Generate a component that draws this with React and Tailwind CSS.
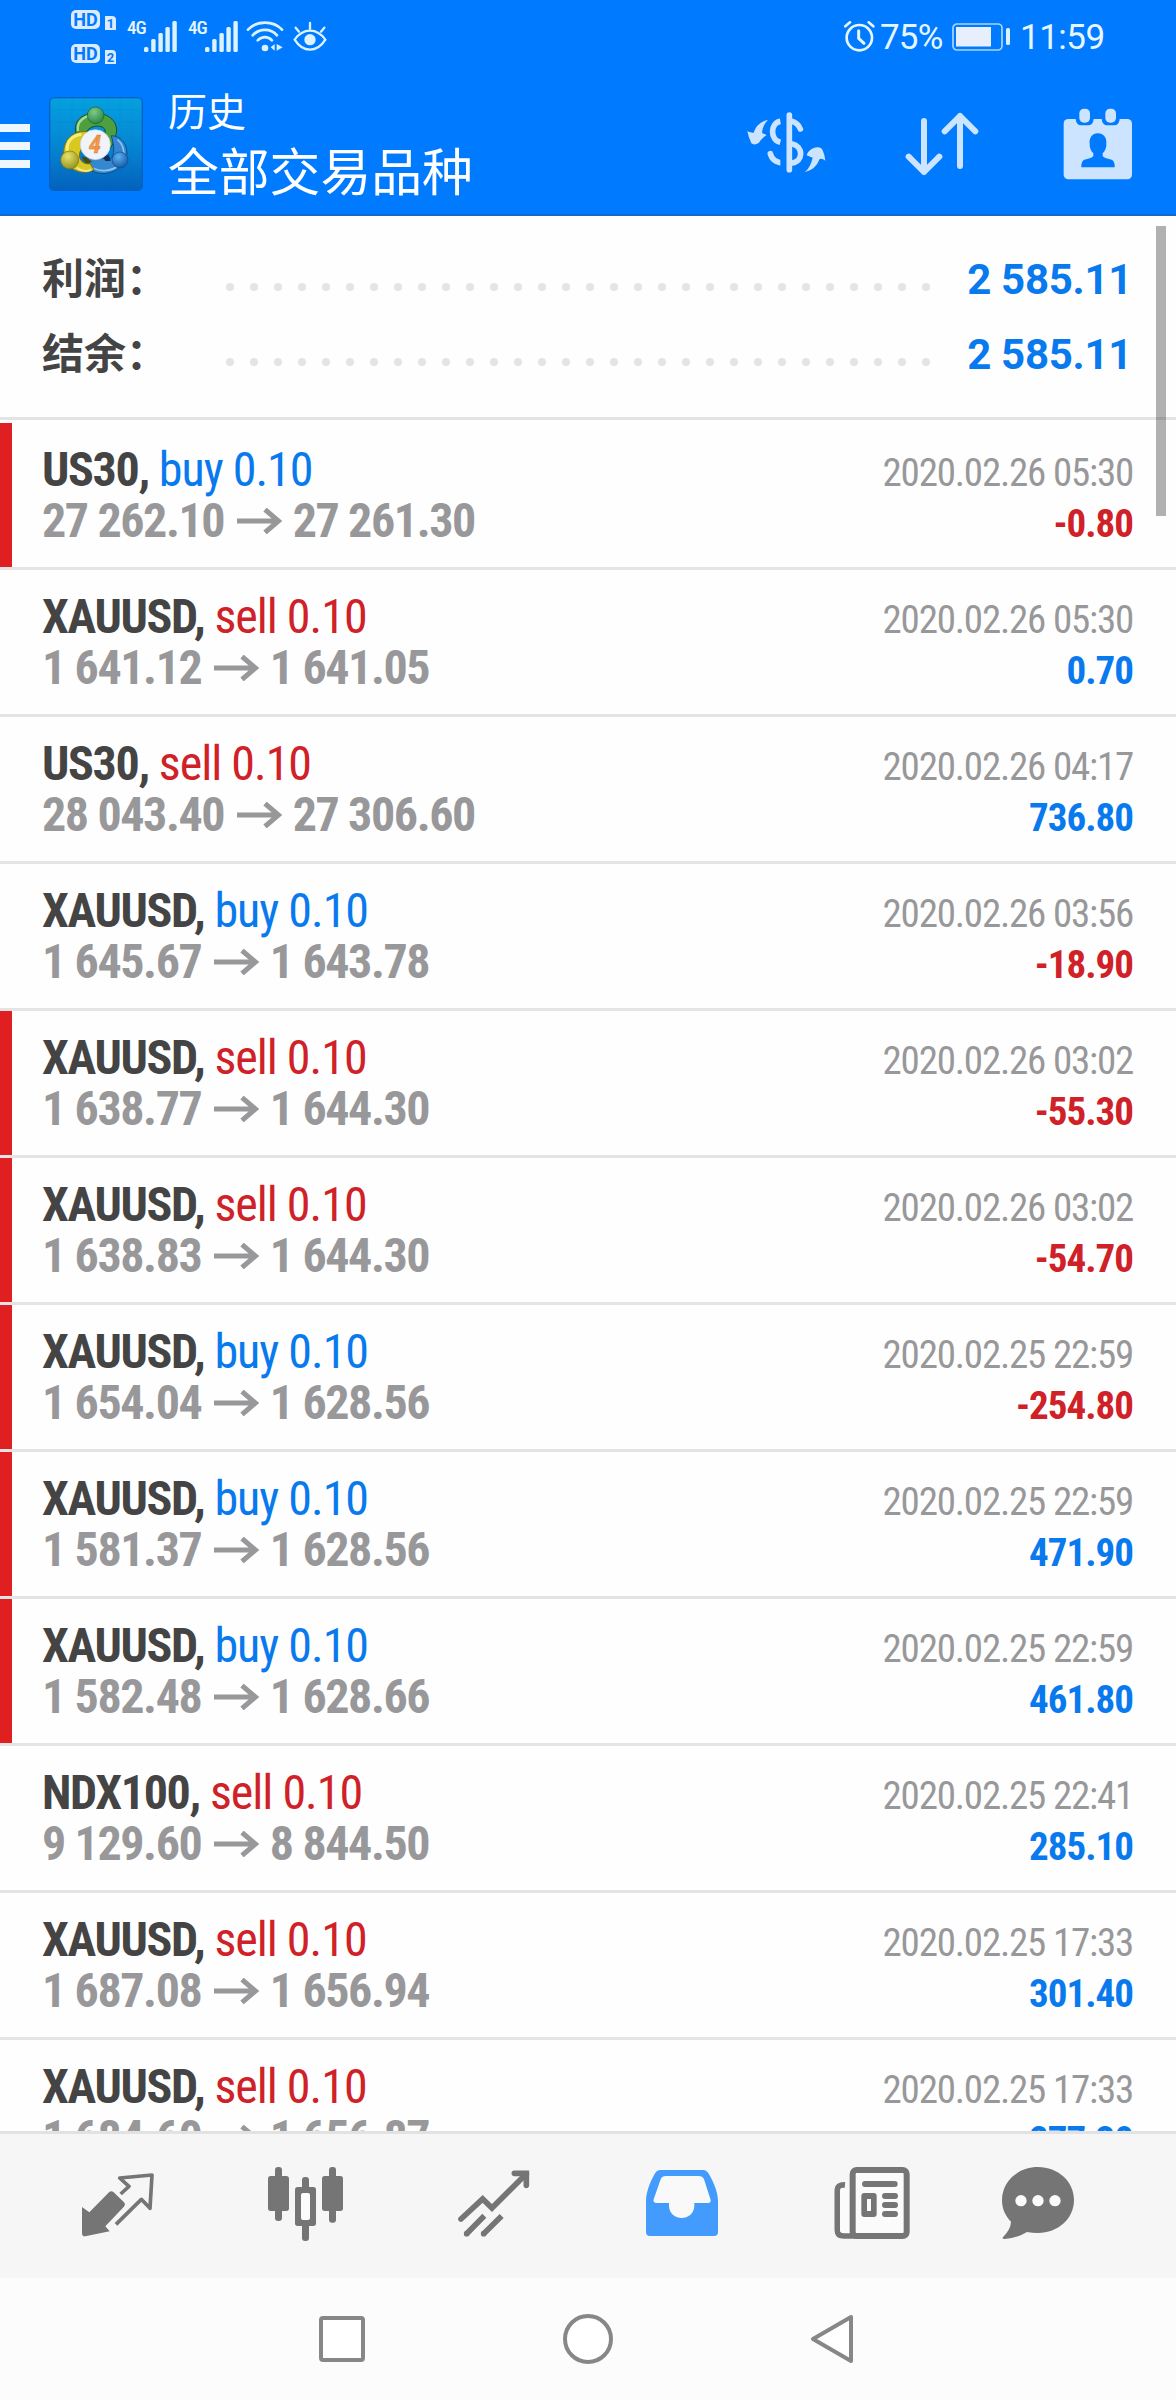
const deals = [
  { symbol: "US30", side: "buy", open: "27 262.10", close: "27 261.30", time: "2020.02.26 05:30", profit: "-0.80", marked: true },
  { symbol: "XAUUSD", side: "sell", open: "1 641.12", close: "1 641.05", time: "2020.02.26 05:30", profit: "0.70" },
  { symbol: "US30", side: "sell", open: "28 043.40", close: "27 306.60", time: "2020.02.26 04:17", profit: "736.80" },
  { symbol: "XAUUSD", side: "buy", open: "1 645.67", close: "1 643.78", time: "2020.02.26 03:56", profit: "-18.90" },
  { symbol: "XAUUSD", side: "sell", open: "1 638.77", close: "1 644.30", time: "2020.02.26 03:02", profit: "-55.30", marked: true },
  { symbol: "XAUUSD", side: "sell", open: "1 638.83", close: "1 644.30", time: "2020.02.26 03:02", profit: "-54.70", marked: true },
  { symbol: "XAUUSD", side: "buy", open: "1 654.04", close: "1 628.56", time: "2020.02.25 22:59", profit: "-254.80", marked: true },
  { symbol: "XAUUSD", side: "buy", open: "1 581.37", close: "1 628.56", time: "2020.02.25 22:59", profit: "471.90", marked: true },
  { symbol: "XAUUSD", side: "buy", open: "1 582.48", close: "1 628.66", time: "2020.02.25 22:59", profit: "461.80", marked: true },
  { symbol: "NDX100", side: "sell", open: "9 129.60", close: "8 844.50", time: "2020.02.25 22:41", profit: "285.10" },
  { symbol: "XAUUSD", side: "sell", open: "1 687.08", close: "1 656.94", time: "2020.02.25 17:33", profit: "301.40" },
  { symbol: "XAUUSD", side: "sell", open: "1 684.60", close: "1 656.87", time: "2020.02.25 17:33", profit: "277.30" },
];

function HdBadge({ n }) {
  return (
    <div className="flex h-5 items-start">
      <div className="flex h-[19px] w-[29px] items-center justify-center rounded-[5px] bg-[#dcebff] text-[18px] font-bold leading-none text-[#007aff]">
        HD
      </div>
      <div className="ml-[5px] mt-[6px] flex h-[14px] w-[11px] items-center justify-center rounded-tr-[4px] bg-[#dcebff] text-[13px] font-bold leading-none text-[#007aff]">
        {n}
      </div>
    </div>
  );
}

function Signal() {
  return (
    <div className="flex">
      <span className="h-[16px] w-[17px] whitespace-nowrap font-['Roboto_Condensed'] text-[19px] font-medium leading-[14px] tracking-[-1px] text-[#e6f6ff]">4G</span>
      <svg className="h-[31px] w-[33px]" viewBox="0 0 33 31" fill="#dcf3ff">
        <rect x="0" y="26" width="4.4" height="5" rx="1.5" />
        <rect x="7.2" y="18" width="4.4" height="13" rx="1.5" />
        <rect x="14.4" y="12" width="4.4" height="19" rx="1.5" />
        <rect x="21.4" y="6" width="4.4" height="25" rx="1.5" />
        <rect x="28.4" y="0" width="4.4" height="31" rx="1.5" />
      </svg>
    </div>
  );
}

function WifiIcon() {
  return (
    <svg className="ml-2 h-[31px] w-[38px]" viewBox="0 0 114 93" fill="none" stroke="#dcf3ff" strokeWidth="8" strokeLinecap="round">
      <path d="M6 26 C32 -2 82 -2 108 26" />
      <path d="M20 43 C40 21 74 21 93 43" />
      <path d="M35 58 C48 45 66 45 78 58" />
      <circle cx="57" cy="81" r="10" fill="#dcf3ff" stroke="none" />
      <path d="M86 69 L74 79 L86 89 Z M92 69 L92 89 L110 79 Z" fill="#dcf3ff" stroke="none" />
    </svg>
  );
}

function EyeIcon() {
  return (
    <svg className="ml-[9px] h-[31px] w-[34px]" viewBox="0 0 102 93" fill="none" stroke="#dcf3ff" strokeWidth="7" strokeLinecap="round">
      <path d="M5 56 C30 20 72 20 97 56 C72 96 30 96 5 56 Z" />
      <circle cx="51" cy="56" r="17" fill="#dcf3ff" stroke="none" />
      <path d="M51 6 V24 M8 20 L18 32 M94 20 L84 32" />
    </svg>
  );
}

function AlarmIcon() {
  return (
    <svg className="h-[31px] w-[31px]" viewBox="0 0 93 93" fill="none" stroke="#e6f6ff" strokeWidth="8" strokeLinecap="round">
      <circle cx="46" cy="50" r="38" />
      <path d="M44 29 V52 L60 67" strokeWidth="9" />
      <path d="M4 16 L18 4 M88 16 L74 4" />
    </svg>
  );
}

function StatusBar() {
  return (
    <div className="flex h-[73px] pl-[71px] font-['Roboto'] text-[#e6f6ff]">
      <div className="flex flex-col gap-[14px] pt-[10px]">
        <HdBadge n="1" />
        <HdBadge n="2" />
      </div>
      <div className="ml-[11px] flex pt-[21px]">
        <Signal />
        <div className="ml-[11px]">
          <Signal />
        </div>
        <WifiIcon />
        <EyeIcon />
      </div>
      <div className="ml-auto mr-[72px] flex pt-[21px]">
        <AlarmIcon />
        <span className="ml-[5px] w-[62px] whitespace-nowrap text-[35px] leading-[34px] tracking-[-.8px]">75%</span>
        <svg className="ml-[10px] mt-[2px] h-[28px] w-[59px]" viewBox="0 0 59 28">
          <rect x="1" y="1" width="49" height="26" rx="4" fill="none" stroke="#a8d4ff" strokeWidth="1.7" />
          <rect x="4" y="4" width="35" height="19.5" fill="#e6effb" />
          <rect x="54" y="5" width="4" height="17" rx="1.5" fill="#dcf3ff" />
        </svg>
        <span className="ml-[9px] w-[84px] whitespace-nowrap text-[35px] leading-[34px] tracking-[-.5px]">11:59</span>
      </div>
    </div>
  );
}

function AppLogo() {
  return (
    <svg className="ml-[19px] h-[94px] w-[94px]" viewBox="27 22 282 282">
      <defs>
        <linearGradient id="tile" x1="0" y1="0" x2="0" y2="1">
          <stop offset="0" stopColor="#05a0e0" />
          <stop offset=".5" stopColor="#0587d2" />
          <stop offset="1" stopColor="#0462bc" />
        </linearGradient>
        <radialGradient id="green" cx=".4" cy=".3" r=".8">
          <stop offset="0" stopColor="#7fc98a" />
          <stop offset="1" stopColor="#1f8138" />
        </radialGradient>
        <radialGradient id="yellow" cx=".4" cy=".3" r=".8">
          <stop offset="0" stopColor="#e8e26a" />
          <stop offset="1" stopColor="#8c8a18" />
        </radialGradient>
        <radialGradient id="blue" cx=".4" cy=".3" r=".8">
          <stop offset="0" stopColor="#5db2f0" />
          <stop offset="1" stopColor="#0b4f9e" />
        </radialGradient>
      </defs>
      <rect x="29" y="24" width="278" height="278" rx="14" fill="url(#tile)" stroke="#0660c4" strokeWidth="4" />
      <g stroke="#0a6fbd" strokeOpacity=".3" strokeWidth="1">
        <path d="M60 26 V300 M96 26 V300 M132 26 V300 M204 26 V300 M240 26 V300 M276 26 V300" />
        <path d="M31 60 H305 M31 96 H305 M31 240 H305 M31 270 H305" />
      </g>
      <path d="M108 132 C98 92 130 70 166 70 C206 70 238 98 228 134 C224 156 214 172 204 186 L194 118 C184 104 150 106 138 128 Z" fill="#4d9f3f" stroke="#174f2a" strokeWidth="3" />
      <path d="M114 124 C108 94 136 78 160 76" fill="none" stroke="#a8d99a" strokeWidth="7" />
      <path d="M214 138 C250 140 268 174 258 208 C244 242 196 264 156 244 C144 236 138 220 134 204 L212 208 C226 196 222 168 214 138 Z" fill="#3588cf" stroke="#0c4d8f" strokeWidth="3" />
      <path d="M232 150 C256 170 258 206 238 226 C216 244 184 248 160 236" fill="none" stroke="#8cc4ee" strokeWidth="5" />
      <path d="M142 126 C96 122 66 154 72 198 C78 236 124 262 162 240 L150 222 C128 226 110 206 122 182 C128 166 138 150 142 126 Z" fill="#d9c81f" stroke="#77700f" strokeWidth="3" />
      <path d="M82 184 C78 156 96 138 124 134" fill="none" stroke="#f6ee7c" strokeWidth="9" />
      <path d="M110 234 C126 246 142 246 154 240" fill="none" stroke="#f0e69a" strokeWidth="6" />
      <path d="M126 200 L142 206 L156 216 L144 222 Q128 218 126 200 Z" fill="#4a4a12" />
      <path d="M188 200 L206 196 L212 214 L196 214 Z" fill="#0d2f58" />
      <circle cx="167" cy="77" r="25" fill="url(#green)" stroke="#17602e" strokeWidth="2" />
      <circle cx="89" cy="211" r="27" fill="url(#yellow)" stroke="#777514" strokeWidth="2" />
      <circle cx="240" cy="211" r="24" fill="url(#blue)" stroke="#0d4c92" strokeWidth="2" />
      <circle cx="166" cy="165" r="45" fill="#f0f3f9" stroke="#c9d2e2" strokeWidth="2" />
      <text x="165" y="190" textAnchor="middle" fontSize="76" fontWeight="700" fill="#f29a4b" stroke="#d97a28" strokeWidth="1" className="italic">
        4
      </text>
    </svg>
  );
}

function ExchangeIcon() {
  return (
    <svg className="h-[62px] w-[80px]" viewBox="20 32 240 186" fill="#cce4ff">
      <path d="M83 58 Q66 76 65 98 L79 104 Q64 114 55 128 Q42 136 33 129 Q25 112 21 93 Q32 98 40 97 Q50 66 83 58 Z" />
      <path d="M193 216 Q211 200 217 172 L199 165 Q201 151 222 142 Q242 137 247 150 Q254 166 255 181 Q247 174 238 176 Q226 208 193 216 Z" />
      <g fill="none" stroke="#cce4ff" strokeWidth="17">
        <path d="M120 63 C90 68 88 118 120 126" />
        <path d="M90 160 Q96 182 120 187" strokeLinecap="round" />
        <path d="M154 63 Q172 67 180 86" strokeLinecap="round" />
        <path d="M154 130 C190 138 190 184 154 188" />
      </g>
      <rect x="120" y="170" width="18" height="30" fill="#007aff" />
      <path d="M147 44 V208" stroke="#cce4ff" strokeWidth="17" strokeLinecap="round" />
    </svg>
  );
}

function SortIcon() {
  return (
    <svg className="h-[64px] w-[74px]" viewBox="0 0 222 192" fill="none" stroke="#cce4ff" strokeWidth="18" strokeLinecap="round" strokeLinejoin="round">
      <path d="M57 27 V180 M11 134 L57 180 L103 134" />
      <path d="M165 162 V12 M119 58 L165 12 L211 58" />
    </svg>
  );
}

function CalendarIcon() {
  return (
    <svg className="h-[72px] w-[70px]" viewBox="0 0 210 216">
      <rect x="2" y="33" width="205" height="181" rx="14" fill="#cce4ff" />
      <path d="M38 33 H92 Q90 52 75 52 H55 Q40 52 38 33 Z M116 33 H170 Q168 52 153 52 H133 Q118 52 116 33 Z" fill="#007aff" />
      <rect x="49" y="2" width="32" height="42" rx="14" fill="#cce4ff" />
      <rect x="127" y="2" width="32" height="42" rx="14" fill="#cce4ff" />
      <path d="M104 76 C122 76 132 90 130 106 C131 118 126 130 119 136 V144 Q122 150 146 155 Q156 160 155 178 H55 Q54 160 64 155 Q88 150 91 144 V136 C84 130 79 118 80 106 C78 90 88 76 104 76 Z" fill="#007aff" />
    </svg>
  );
}

function Header() {
  return (
    <div className="h-[216px] border-b-2 border-[#1468cf] bg-[#007aff]">
      <StatusBar />
      <div className="flex pt-[24px]">
        <div className="flex w-[30px] flex-col gap-[10px] pt-[27px]">
          <span className="h-2 bg-[#eef6ff]" />
          <span className="h-2 bg-[#eef6ff]" />
          <span className="h-2 bg-[#eef6ff]" />
        </div>
        <AppLogo />
        <div className="-mt-[7px] ml-[25px] text-white">
          <div className="text-[39px] leading-[46px]">历史</div>
          <div className="text-[50.8px] leading-[76px]">全部交易品种</div>
        </div>
        <div className="ml-auto mr-[43px] flex pt-[11px]">
          <div className="pt-[3px]">
            <ExchangeIcon />
          </div>
          <div className="ml-[78px] pt-[4px]">
            <SortIcon />
          </div>
          <div className="ml-[84px]">
            <CalendarIcon />
          </div>
        </div>
      </div>
    </div>
  );
}

function SummaryRow({ label, value }) {
  return (
    <div className="flex h-[75px] items-center pl-[42px] pr-[44px]">
      <div className="w-[184px] text-[42px] font-bold leading-[77px] text-[#444]">{label}</div>
      <div className="mt-[14px] flex gap-4">
        {Array.from({ length: 30 }, (_, i) => (
          <span key={i} className="size-2 rounded-full bg-[#e4e4e6]" />
        ))}
      </div>
      <div className="ml-auto whitespace-nowrap font-['Roboto'] text-[42px] font-bold leading-[75px] tracking-[-.3px] text-[#087aee]">{value}</div>
    </div>
  );
}

function Deal({ symbol, side, open, close, time, profit, marked }) {
  return (
    <div className="flex h-[147px] shrink-0 border-t-[3px] border-[#e4e4e5] first:border-transparent">
      <div className={marked ? "w-3 bg-[#e02020]" : "w-3"} />
      <div className="ml-[30px] pt-[21px] text-[48px] leading-[51px]">
        <div className="whitespace-nowrap tracking-[-1px]">
          <span className="font-bold tracking-[-1.35px] text-[#444]">{symbol},</span>{" "}
          <span className={side === "buy" ? "text-[#087aee]" : "text-[#cf2127]"}>{side} 0.10</span>
        </div>
        <div className="flex items-center whitespace-nowrap font-bold tracking-[-1.4px] text-[#98989a]">
          {open}
          <svg className="ml-[12.5px] mr-[11px] h-[26px] w-[45px]" viewBox="0 0 45 26" fill="none" stroke="#98989a" strokeWidth="5">
            <path d="M0 13 H42 M28 1.5 L41.5 13 L28 24.5" />
          </svg>
          {close}
        </div>
      </div>
      <div className="ml-auto mr-[43px] whitespace-nowrap pt-[25px] text-right text-[39px] leading-[51px]">
        <div className="tracking-[-1.2px] text-[#98989a]">{time}</div>
        <div className={profit.startsWith("-") ? "font-bold tracking-[-1px] text-[#cf2127]" : "font-bold tracking-[-1px] text-[#087aee]"}>
          {profit}
        </div>
      </div>
    </div>
  );
}

function TabBar() {
  return (
    <div className="h-[147px] border-t-[3px] border-[#e2e2e2] bg-[#f6f6f6]">
      <div className="flex h-[110px] items-start pl-[82px] pt-[33px] text-[#757575]">
        <svg className="mt-[6px] h-[64px] w-[72px]" viewBox="36 68 216 192" fill="none" stroke="currentColor" strokeWidth="11">
          <path d="M36 170 L58 186 L117 126 Q124 120 131 126 L162 156 Q168 163 161 170 L106 228 L119 243 L46 258 Q36 259 36 248 Z" fill="currentColor" stroke="none" />
          <path d="M152 131 L177 108 L149 83 L246 74 L240 174 L214 147 L138 222" strokeLinejoin="round" />
        </svg>
        <svg className="ml-[114px] h-[74px] w-[75px]" viewBox="594 51 225 222" fill="currentColor">
          <rect x="615" y="51" width="21" height="162" rx="9" />
          <rect x="594" y="78" width="63" height="105" rx="8" />
          <rect x="777" y="51" width="21" height="167" rx="9" />
          <rect x="756" y="78" width="63" height="105" rx="8" />
          <rect x="696" y="81" width="21" height="192" rx="9" />
          <rect x="675" y="111" width="63" height="117" rx="8" />
          <rect x="693" y="129" width="27" height="81" rx="6" fill="#fcfcfc" />
        </svg>
        <svg className="ml-[115px] mt-[3px] h-[67px] w-[72px]" viewBox="1163 59 216 201" fill="none" stroke="currentColor" strokeWidth="17">
          <path d="M1172 206 L1237 146 L1265 173 L1368 70" strokeLinecap="round" />
          <path d="M1332 69 H1368 V105" strokeLinecap="round" />
          <path d="M1189 250 L1242 196 M1240 250 L1294 197" />
          <circle cx="1189" cy="250" r="8.5" fill="currentColor" stroke="none" />
          <circle cx="1240" cy="250" r="8.5" fill="currentColor" stroke="none" />
        </svg>
        <svg className="ml-[116px] mt-[3px] h-[66px] w-[72px]" viewBox="50 60 216 198">
          <path d="M94 60 H222 Q232 60 240 74 C256 102 266 130 266 152 V246 Q266 258 254 258 H62 Q50 258 50 246 V152 C50 130 60 100 76 72 Q82 60 94 60 Z" fill="#429bfd" />
          <path d="M110 78 H208 Q220 78 224 88 L244 150 Q245 159 236 159 H195 V168 C193 216 121 216 119 168 V159 H80 Q70 158 73 148 L94 88 Q98 78 110 78 Z" fill="#f9f9f9" />
        </svg>
        <svg className="ml-[116px] h-[72px] w-[76px]" viewBox="612 51 228 216" fill="currentColor">
          <path d="M645 105 Q622 103 622 122 V240 Q622 258 642 258 H700" fill="none" stroke="currentColor" strokeWidth="17" />
          <rect x="630" y="115" width="29" height="134" rx="9" fill="#fbfbfb" />
          <rect x="668" y="60" width="162" height="198" rx="12" fill="#fbfbfb" stroke="currentColor" strokeWidth="18" />
          <path d="M696 102 a9 9 0 0 1 9 -9 H794 a9 9 0 0 1 0 18 H705 a9 9 0 0 1 -9 -9 Z" />
          <rect x="694" y="129" width="46" height="72" rx="9" />
          <rect x="711" y="147" width="12" height="36" fill="#fbfbfb" />
          <rect x="756" y="129" width="48" height="18" rx="9" />
          <rect x="756" y="156" width="48" height="18" rx="9" />
          <rect x="756" y="183" width="48" height="18" rx="9" />
        </svg>
        <svg className="ml-[92px] h-[72px] w-[72px]" viewBox="1116 51 216 216" fill="currentColor">
          <path d="M1224 51 C1284 51 1332 94 1332 150 C1332 206 1284 249 1224 249 Q1206 249 1191 246 Q1162 264 1124 267 Q1114 267 1120 260 Q1142 238 1143 215 C1126 198 1116 176 1116 150 C1116 94 1164 51 1224 51 Z" />
          <g fill="#fbfbfb">
            <circle cx="1173" cy="152" r="17" />
            <circle cx="1224" cy="152" r="17" />
            <circle cx="1275" cy="152" r="17" />
          </g>
        </svg>
      </div>
    </div>
  );
}

function NavBar() {
  return (
    <div className="flex h-[122px] items-start bg-[#fcfcfc] pl-[319px] pt-9">
      <div className="mt-[2px] size-[46px] rounded-[4px] border-4 border-[#878787] bg-white" />
      <div className="ml-[198px] size-[50px] rounded-full border-4 border-[#878787] bg-white" />
      <svg className="ml-[197px] h-[50px] w-[44px]" viewBox="0 0 44 50" fill="#fff" stroke="#878787" strokeWidth="4" strokeLinejoin="round">
        <path d="M41 3 V47 L3 25 Z" />
      </svg>
    </div>
  );
}

export default function App() {
  return (
    <div className="flex h-[2400px] w-[1176px] flex-col overflow-hidden bg-[#fefefe] font-['Roboto_Condensed','Roboto','Noto_Sans_CJK_SC',sans-serif]">
      <Header />
      <div className="relative flex h-[1915px] flex-col overflow-hidden">
        <div className="h-[204px] shrink-0 border-b-[3px] border-[#e4e4e5] pt-[26px]">
          <SummaryRow label="利润：" value="2 585.11" />
          <SummaryRow label="结余：" value="2 585.11" />
        </div>
        <div>
          {deals.map((deal, i) => (
            <Deal key={i} {...deal} />
          ))}
        </div>
        <div className="absolute right-[10px] top-[10px] h-[290px] w-[10px] bg-black/30" />
      </div>
      <TabBar />
      <NavBar />
    </div>
  );
}
